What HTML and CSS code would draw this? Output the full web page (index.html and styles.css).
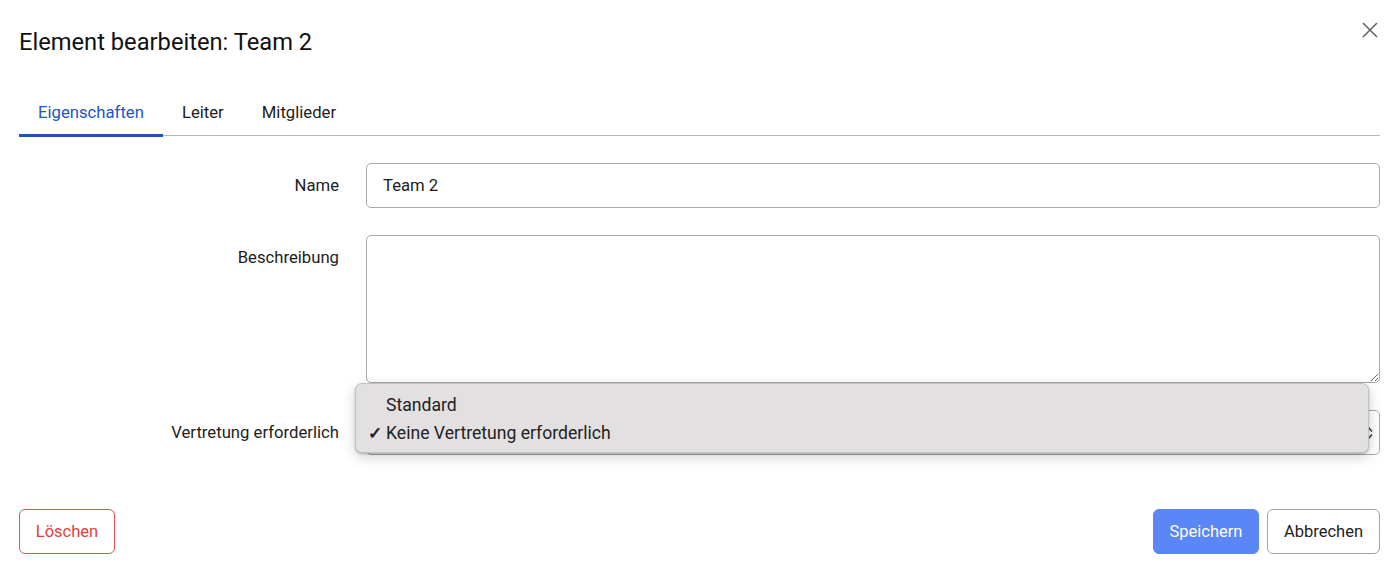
FILE: index.html
```html
<!DOCTYPE html>
<html lang="de">
<head>
<meta charset="utf-8">
<title>Element bearbeiten</title>
<link rel="stylesheet" href="styles.css">
</head>
<body>
<div class="dialog">
  <header class="dialog-header">
    <h1 class="dialog-title">Element bearbeiten: Team 2</h1>
    <button class="close-btn" aria-label="Schließen">
      <svg width="16" height="16" viewBox="0 0 16 16"><path d="M1 1 L15 15 M15 1 L1 15" stroke="#666" stroke-width="1.6" fill="none"/></svg>
    </button>
  </header>
  <nav class="tabs">
    <div class="tab active">Eigenschaften</div>
    <div class="tab">Leiter</div>
    <div class="tab">Mitglieder</div>
  </nav>
  <form class="form">
    <div class="row">
      <label class="label">Name</label>
      <input class="input" type="text" value="Team 2">
    </div>
    <div class="row">
      <label class="label">Beschreibung</label>
      <textarea class="input textarea"></textarea>
    </div>
    <div class="row">
      <label class="label">Vertretung erforderlich</label>
      <div class="select-wrap">
        <div class="input select">
          <span class="select-value"></span>
          <svg class="arrows" width="8" height="14" viewBox="0 0 8 14"><path d="M1 5.5 L4 2 L7 5.5 M1 8.5 L4 12 L7 8.5" stroke="#333" stroke-width="1.4" fill="none"/></svg>
        </div>
        <div class="menu">
          <div class="menu-item"><span class="check"></span>Standard</div>
          <div class="menu-item"><span class="check">✓</span>Keine Vertretung erforderlich</div>
        </div>
      </div>
    </div>
  </form>
  <footer class="actions">
    <button class="btn btn-danger">Löschen</button>
    <div class="actions-right">
      <button class="btn btn-primary">Speichern</button>
      <button class="btn btn-default">Abbrechen</button>
    </div>
  </footer>
</div>
</body>
</html>
```

FILE: styles.css
```css
* { box-sizing: border-box; }
html, body { margin: 0; padding: 0; background: #fff; }
body {
  font-family: Roboto, "Liberation Sans", Arial, sans-serif;
  color: #1d1d1d;
  font-size: 16.7px;
}
.dialog {
  width: 1400px;
  height: 576px;
  padding: 0 20px 0 19px;
}
.dialog-header {
  display: flex;
  justify-content: space-between;
  align-items: flex-start;
  height: 85px;
}
.dialog-title {
  margin: 27px 0 0 0;
  font-size: 23.7px;
  font-weight: 400;
  line-height: 30px;
  color: #111;
}
.close-btn {
  margin: 22px 2px 0 0;
  padding: 0;
  border: 0;
  background: none;
  width: 16px;
  height: 16px;
  cursor: pointer;
}
.close-btn svg { display: block; }
.tabs {
  display: flex;
  border-bottom: 1px solid #b8b8b8;
  height: 51px;
}
.tab {
  padding: 0 19px;
  line-height: 55px;
  height: 51px;
  font-size: 16.7px;
  color: #1d1d1d;
}
.tab.active {
  color: #2356c0;
  border-bottom: 3px solid #1b52c2;
  height: 52px;
  margin-bottom: -2px;
  position: relative;
  z-index: 1;
}
.form {
  display: flex;
  flex-direction: column;
  gap: 27px;
  padding-top: 27px;
}
.row {
  display: flex;
  align-items: flex-start;
  gap: 27px;
}
.label {
  width: 320px;
  flex: none;
  text-align: right;
  line-height: 45px;
  font-size: 16.7px;
  color: #1d1d1d;
}
.input {
  flex: 1;
  height: 45px;
  border: 1px solid #a9a9a9;
  border-radius: 5px;
  padding: 0 16px;
  font-family: inherit;
  font-size: 16.7px;
  color: #1d1d1d;
  background: #fff;
  outline: none;
}
.textarea {
  height: 148px;
  padding: 12px 16px;
  resize: vertical;
}
.select-wrap {
  flex: 1;
  position: relative;
  display: flex;
}
.select {
  display: flex;
  align-items: center;
  justify-content: space-between;
  padding-right: 6px;
}
.arrows { display: block; }
.menu {
  position: absolute;
  left: -11px;
  top: -27px;
  width: 1014px;
  height: 70px;
  background: #e2e0e0;
  border: 1px solid #c4c2c2;
  border-radius: 7px;
  box-shadow: 0 4px 14px rgba(0,0,0,0.18), 0 1px 2px rgba(0,0,0,0.25);
  padding-top: 7px;
}
.menu-item {
  display: flex;
  align-items: center;
  height: 28px;
  font-size: 17.6px;
  color: #222;
}
.check {
  width: 30px;
  padding-left: 12px;
  font-size: 17px;
  font-weight: 700;
}
.actions {
  display: flex;
  justify-content: space-between;
  margin-top: 54px;
}
.actions-right {
  display: flex;
  gap: 8px;
}
.btn {
  height: 45px;
  border-radius: 6px;
  font-family: inherit;
  font-size: 16.5px;
  padding: 0;
  cursor: pointer;
  background: #fff;
}
.btn-danger {
  width: 96px;
  border: 1px solid #e4544d;
  color: #e23f36;
}
.btn-primary {
  width: 106px;
  border: 1px solid #5b86f6;
  background: #5b86f6;
  color: #fff;
}
.btn-default {
  width: 113px;
  border: 1px solid #a3a3a3;
  color: #1d1d1d;
}
```
